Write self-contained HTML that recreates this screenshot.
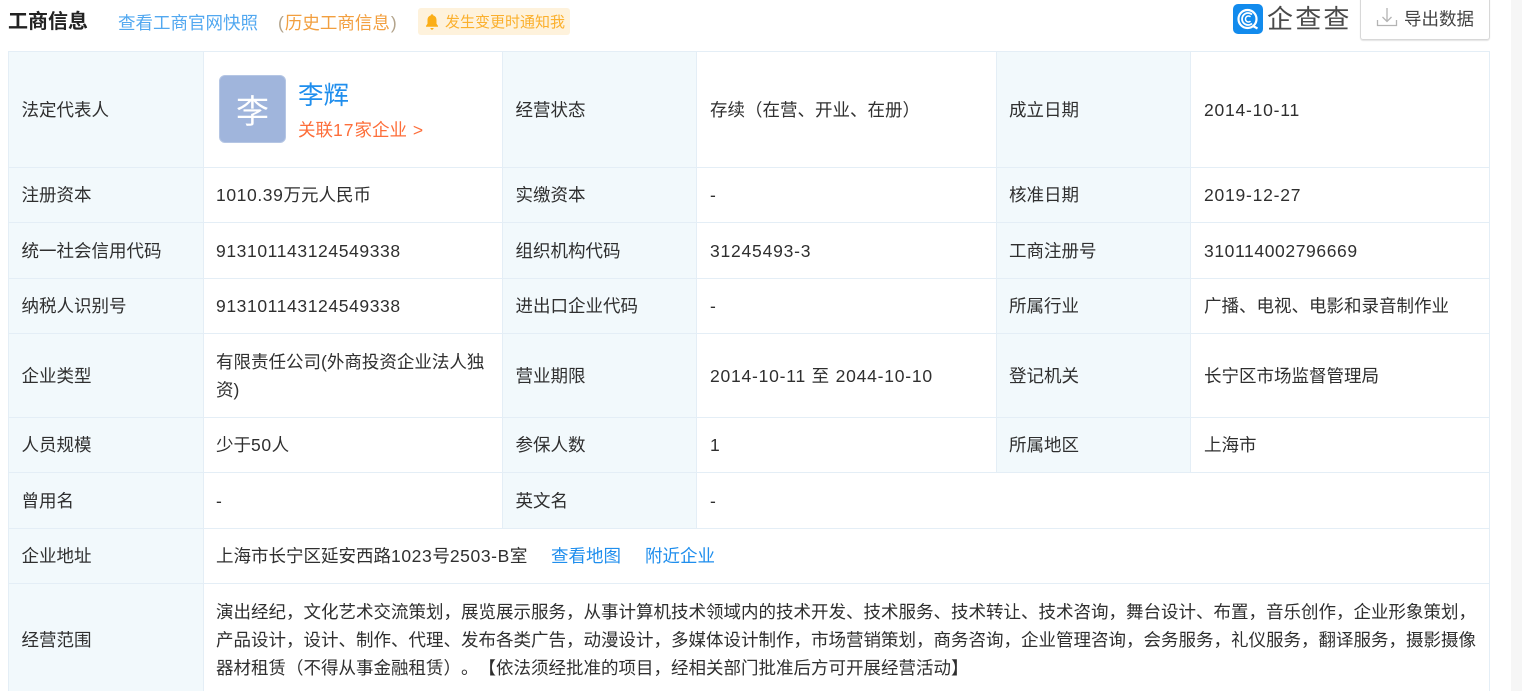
<!DOCTYPE html>
<html lang="zh">
<head>
<meta charset="utf-8">
<title>工商信息</title>
<style>
html,body{margin:0;padding:0;width:1522px;height:691px;overflow:hidden;background:#fff}
body{position:relative;font-family:"Liberation Sans","WenQuanYi Zen Hei","Noto Sans CJK SC",sans-serif;font-size:17.5px;color:#2f2f2f;text-spacing-trim:space-all}
.a{position:absolute;white-space:nowrap}
.b{position:absolute;background:#f2f9fc}
.h{position:absolute;background:#e4eef6;height:1px}
.v{position:absolute;background:#e4eef6;width:1px}
.t{position:absolute;white-space:nowrap;line-height:22px}
.bl{color:#128bed}
.n{letter-spacing:.6px}
.d{letter-spacing:.78px}
</style>
</head>
<body>
<div class="a" style="left:1511px;top:0;width:11px;height:691px;background:#f6f6f6"></div>

<div class="a" style="left:8px;top:10px;font-size:20px;font-weight:bold;color:#222;line-height:25px">工商信息</div>
<div class="a" style="left:118px;top:11px;color:#52a8f0;line-height:24px">查看工商官网快照</div>
<div class="a" style="left:278px;top:11px;color:#b3a48c;line-height:24px">(<span style="color:#f29f3f;margin-left:1px">历史工商信息</span><span style="margin-left:1px">)</span></div>
<div class="a" style="left:418px;top:8px;width:152px;height:27px;background:#fef2dc;border-radius:3px"></div>
<svg class="a" style="left:424px;top:13px" width="16" height="18" viewBox="0 0 16 18"><path d="M8 1.2c.8 0 1.3.5 1.3 1.3 2.2.6 3.2 2.3 3.2 4.6v3.6l1.5 2.2v.8H2v-.8l1.5-2.2V7.100c0-2.300 1-4 3.200-4.600C6.700 1.700 7.200 1.200 8 1.200zM6.300 15h3.400c-.2 1-.9 1.700-1.700 1.700S6.500 16 6.300 15z" fill="#fbae17"/></svg>
<div class="a" style="left:445px;top:12px;font-size:15px;line-height:22px;color:#fbb02d">发生变更时通知我</div>

<svg class="a" style="left:1233px;top:4px" width="30" height="30" viewBox="0 0 30 30"><rect width="30" height="30" rx="5" fill="#128bed"/><circle cx="14.500" cy="15" r="9" fill="none" stroke="#fff" stroke-width="2.200"/><path d="M19 10.500A6 6 0 1 0 19 19.500" fill="none" stroke="#fff" stroke-width="1.800"/><path d="M17.500 12.800A3 3 0 1 0 17.500 17.200" fill="none" stroke="#fff" stroke-width="1.500"/><path d="M20 22l4.500 2.500" stroke="#fff" stroke-width="2.200"/></svg>
<div class="a" style="left:1267px;top:3px;font-size:26px;line-height:32px;color:#4a4a4a;letter-spacing:2.2px">企查查</div>

<div class="a" style="left:1360px;top:-6px;width:128px;height:44px;border:1px solid #d8d8d8;border-radius:3px;box-shadow:0 1px 1px #e4e4e4"></div>
<svg class="a" style="left:1376px;top:6px" width="22" height="22" viewBox="0 0 22 22"><path d="M11 2v13M6.500 11l4.500 4.500L15.500 11M1.500 14v5.500h19V14" fill="none" stroke="#b4b4b4" stroke-width="1.300"/></svg>
<div class="a" style="left:1404px;top:7px;line-height:24px;color:#444">导出数据</div>

<!-- label backgrounds -->
<div class="b" style="left:9px;top:52px;width:194px;height:639px"></div>
<div class="b" style="left:503px;top:52px;width:193px;height:420px"></div>
<div class="b" style="left:503px;top:473px;width:193px;height:55px"></div>
<div class="b" style="left:997px;top:52px;width:193px;height:420px"></div>

<!-- grid -->
<div class="h" style="left:8px;top:51px;width:1482px"></div>
<div class="h" style="left:8px;top:167px;width:1482px"></div>
<div class="h" style="left:8px;top:222px;width:1482px"></div>
<div class="h" style="left:8px;top:278px;width:1482px"></div>
<div class="h" style="left:8px;top:333px;width:1482px"></div>
<div class="h" style="left:8px;top:417px;width:1482px"></div>
<div class="h" style="left:8px;top:472px;width:1482px"></div>
<div class="h" style="left:8px;top:528px;width:1482px"></div>
<div class="h" style="left:8px;top:583px;width:1482px"></div>
<div class="v" style="left:8px;top:51px;height:640px"></div>
<div class="v" style="left:203px;top:51px;height:640px"></div>
<div class="v" style="left:502px;top:51px;height:477px"></div>
<div class="v" style="left:696px;top:51px;height:477px"></div>
<div class="v" style="left:996px;top:51px;height:421px"></div>
<div class="v" style="left:1190px;top:51px;height:421px"></div>
<div class="v" style="left:1489px;top:51px;height:640px"></div>

<!-- row 1 -->
<div class="t" style="left:21.500px;top:99px">法定代表人</div>
<div class="a" style="left:219px;top:75px;width:67px;height:68px;background:#a0b5dc;border-radius:6px;border:1px solid #b5c6e4;box-sizing:border-box;color:#fff;font-size:33px;line-height:72px;text-align:center">李</div>
<div class="a bl" style="left:298px;top:81px;font-size:25.500px;line-height:30px;color:#1f8eed">李辉</div>
<div class="a" style="left:298px;top:119px;line-height:22px;color:#fd6e3a">关联<span style="letter-spacing:1px">17</span>家企业 <span style="margin-left:1px">&gt;</span></div>
<div class="t" style="left:515.500px;top:99px">经营状态</div>
<div class="t" style="left:710px;top:99px">存续（在营、开业、在册）</div>
<div class="t" style="left:1009px;top:99px">成立日期</div>
<div class="t d" style="left:1204px;top:99px">2014-10-11</div>

<!-- row 2 -->
<div class="t" style="left:21.500px;top:184px">注册资本</div>
<div class="t" style="left:216px;top:184px"><span class="n">1010.39</span>万元人民币</div>
<div class="t" style="left:515.500px;top:184px">实缴资本</div>
<div class="t" style="left:710px;top:184px">-</div>
<div class="t" style="left:1009px;top:184px">核准日期</div>
<div class="t d" style="left:1204px;top:184px">2019-12-27</div>

<!-- row 3 -->
<div class="t" style="left:21.500px;top:240px">统一社会信用代码</div>
<div class="t n" style="left:216px;top:240px">913101143124549338</div>
<div class="t" style="left:515.500px;top:240px">组织机构代码</div>
<div class="t d" style="left:710px;top:240px">31245493-3</div>
<div class="t" style="left:1009px;top:240px">工商注册号</div>
<div class="t n" style="left:1204px;top:240px">310114002796669</div>

<!-- row 4 -->
<div class="t" style="left:21.500px;top:295px">纳税人识别号</div>
<div class="t n" style="left:216px;top:295px">913101143124549338</div>
<div class="t" style="left:515.500px;top:295px">进出口企业代码</div>
<div class="t" style="left:710px;top:295px">-</div>
<div class="t" style="left:1009px;top:295px">所属行业</div>
<div class="t" style="left:1204px;top:295px">广播、电视、电影和录音制作业</div>

<!-- row 5 -->
<div class="t" style="left:21.500px;top:365px">企业类型</div>
<div class="t" style="left:216px;top:351px">有限责任公司(外商投资企业法人独</div>
<div class="t" style="left:216px;top:379px">资)</div>
<div class="t" style="left:515.500px;top:365px">营业期限</div>
<div class="t d" style="left:710px;top:365px">2014-10-11 至 2044-10-10</div>
<div class="t" style="left:1009px;top:365px">登记机关</div>
<div class="t" style="left:1204px;top:365px">长宁区市场监督管理局</div>

<!-- row 6 -->
<div class="t" style="left:21.500px;top:434px">人员规模</div>
<div class="t" style="left:216px;top:434px">少于<span class="n">50</span>人</div>
<div class="t" style="left:515.500px;top:434px">参保人数</div>
<div class="t" style="left:710px;top:434px">1</div>
<div class="t" style="left:1009px;top:434px">所属地区</div>
<div class="t" style="left:1204px;top:434px">上海市</div>

<!-- row 7 -->
<div class="t" style="left:21.500px;top:490px">曾用名</div>
<div class="t" style="left:216px;top:490px">-</div>
<div class="t" style="left:515.500px;top:490px">英文名</div>
<div class="t" style="left:710px;top:490px">-</div>

<!-- row 8 -->
<div class="t" style="left:21.500px;top:545px">企业地址</div>
<div class="t" style="left:216px;top:545px">上海市长宁区延安西路<span class="n">1023</span>号<span class="n">2503-B</span>室</div>
<div class="t bl" style="left:551px;top:545px;color:#1f8eed">查看地图</div>
<div class="t bl" style="left:645px;top:545px;color:#1f8eed">附近企业</div>

<!-- row 9 -->
<div class="t" style="left:21.500px;top:629px">经营范围</div>
<div class="t" style="left:216px;top:601px">演出经纪，文化艺术交流策划，展览展示服务，从事计算机技术领域内的技术开发、技术服务、技术转让、技术咨询，舞台设计、布置，音乐创作，企业形象策划，</div>
<div class="t" style="left:216px;top:629px">产品设计，设计、制作、代理、发布各类广告，动漫设计，多媒体设计制作，市场营销策划，商务咨询，企业管理咨询，会务服务，礼仪服务，翻译服务，摄影摄像</div>
<div class="t" style="left:216px;top:657px">器材租赁（不得从事金融租赁）。【依法须经批准的项目，经相关部门批准后方可开展经营活动】</div>
</body>
</html>
